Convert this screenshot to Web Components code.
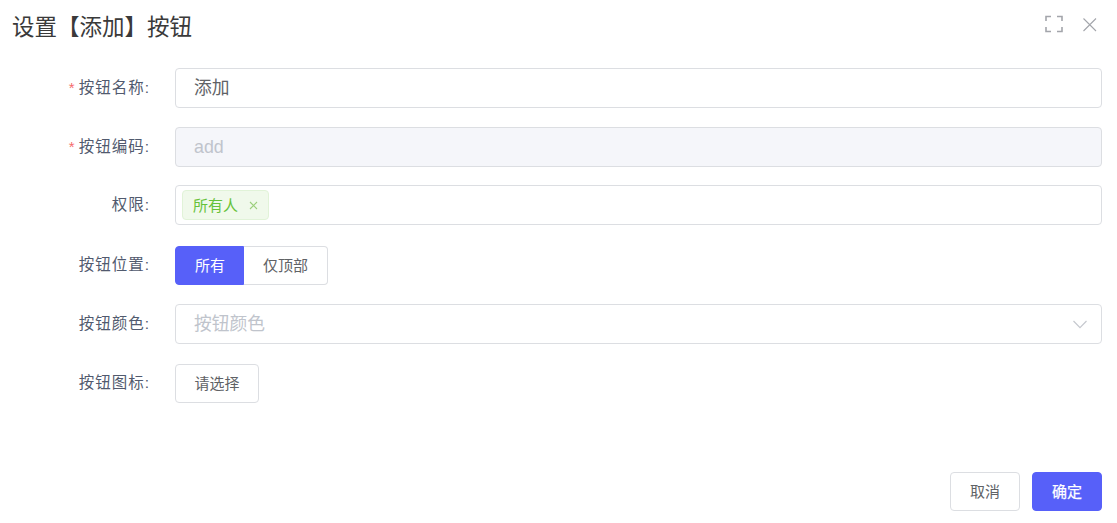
<!DOCTYPE html>
<html lang="zh">
<head>
<meta charset="utf-8">
<title>设置按钮</title>
<style>
  html, body { margin: 0; padding: 0; background: #fff; }
  body { font-family: "Liberation Sans", "Noto Sans CJK SC", sans-serif; }
</style>
</head>
<body>
<btn-dialog>
  <span slot="title">设置【添加】按钮</span>

  <form-row label="按钮名称" required gap="19">
    <text-box value="添加"></text-box>
  </form-row>
  <form-row label="按钮编码" required gap="18">
    <text-box value="add" disabled></text-box>
  </form-row>
  <form-row label="权限" gap="21">
    <text-box><green-tag>所有人</green-tag></text-box>
  </form-row>
  <form-row label="按钮位置" gap="19" h="39">
    <radio-group>
      <radio-btn checked>所有</radio-btn>
      <radio-btn>仅顶部</radio-btn>
    </radio-group>
  </form-row>
  <form-row label="按钮颜色" gap="20">
    <text-box placeholder="按钮颜色" arrow></text-box>
  </form-row>
  <form-row label="按钮图标" gap="0" h="39">
    <plain-btn w="84">请选择</plain-btn>
  </form-row>

  <plain-btn slot="footer" w="70">取消</plain-btn>
  <plain-btn slot="footer" w="70" primary>确定</plain-btn>
</btn-dialog>

<script>
class BtnDialog extends HTMLElement {
  constructor () {
    super();
    this.attachShadow({mode: 'open'}).innerHTML = `
      <style>
      :host { display: flex; flex-direction: column; height: 523px; box-sizing: border-box; padding: 0 15px 12px 12px; }
      header { display: flex; justify-content: space-between; height: 68px; flex: none; }
      .title { font-size: 22.5px; line-height: 30px; margin-top: 13px; color: #3a3a3a; }
      .tools { display: flex; gap: 19px; padding: 15px 5px 0 0; height: 20px; }
      .tools svg { display: block; stroke: #a3a5ab; fill: none; }
      main { flex: 1; }
      footer { display: flex; justify-content: flex-end; gap: 12px; }
      </style>
      <header>
        <div class="title"><slot name="title"></slot></div>
        <div class="tools">
          <svg width="18" height="18" viewBox="0 0 18 18" stroke-width="1.6">
            <path d="M1 6V1.5H6M12 1.5H17V6M17 12V16.5H12M6 16.5H1V12"/>
          </svg>
          <svg width="15" height="18" viewBox="0 0 15 18" stroke-width="1.1">
            <path d="M1.5 3.5L14 16M14 3.5L1.5 16"/>
          </svg>
        </div>
      </header>
      <main><slot></slot></main>
      <footer><slot name="footer"></slot></footer>`;
  }
}

class FormRow extends HTMLElement {
  constructor () {
    super();
    this.attachShadow({mode: 'open'}).innerHTML = `
      <style>
      :host { display: flex; align-items: center; }
      label { width: 138px; flex: none; padding: 0 25px 0 0; text-align: right; font-size: 15.5px; line-height: 20px; color: #515a6e; letter-spacing: 1px; white-space: nowrap; }
      :host([h]) label { padding-bottom: 2px; }
      .req { color: #f56c6c; font-size: 15px; margin-right: 4px; letter-spacing: 0; }
      .body { flex: 1; min-width: 0; }
      </style>
      <label></label>
      <div class="body"><slot></slot></div>`;
  }
  connectedCallback () {
    const label = this.shadowRoot.querySelector('label');
    const req = this.hasAttribute('required') ? '<span class="req">*</span>' : '';
    label.innerHTML = req + this.getAttribute('label') + ':';
    this.style.marginBottom = (this.getAttribute('gap') || 0) + 'px';
    this.style.height = (this.getAttribute('h') || 40) + 'px';
  }
}

class TextBox extends HTMLElement {
  constructor () {
    super();
    this.attachShadow({mode: 'open'}).innerHTML = `
      <style>
      :host { display: flex; align-items: center; position: relative; box-sizing: border-box; height: 40px; padding: 0 18px; border: 1px solid #dcdee2; border-radius: 4px; background: #fff; font-size: 17.8px; color: #606266; }
      :host([disabled]) { background: #f5f6fa; color: #c0c4cc; }
      :host([placeholder]) { color: #c0c4cc; }
      .val { position: relative; top: -2px; }
      :host([disabled]) .val { top: 0; }
      ::slotted(green-tag) { margin-left: -12px; }
      svg { position: absolute; right: 14px; top: 15px; stroke: #c5c8ce; fill: none; }
      </style>
      <span class="val"></span><slot></slot>`;
  }
  connectedCallback () {
    const val = this.getAttribute('value') || this.getAttribute('placeholder') || '';
    this.shadowRoot.querySelector('.val').textContent = val;
    if (this.hasAttribute('arrow')) {
      this.shadowRoot.innerHTML += `<svg width="14" height="9" viewBox="0 0 14 9" stroke-width="1.2"><path d="M.5 1L7 7.6 13.5 1"/></svg>`;
    }
  }
}

class GreenTag extends HTMLElement {
  constructor () {
    super();
    this.attachShadow({mode: 'open'}).innerHTML = `
      <style>
      :host { display: inline-flex; align-items: center; box-sizing: border-box; height: 30px; padding: 0 10px 2px; background: #f0f9eb; border: 1px solid #e1f3d8; border-radius: 4px; color: #67c23a; font-size: 15px; }
      svg { margin: 2px 0 0 11px; stroke: #9ccf7c; fill: none; }
      </style>
      <slot></slot>
      <svg width="9" height="9" viewBox="0 0 9 9" stroke-width="1.1"><path d="M1 1L8 8M8 1L1 8"/></svg>`;
  }
}

class RadioGroup extends HTMLElement {
  constructor () {
    super();
    this.attachShadow({mode: 'open'}).innerHTML = `
      <style>
      :host { display: flex; }
      </style>
      <slot></slot>`;
  }
}

class RadioBtn extends HTMLElement {
  constructor () {
    super();
    this.attachShadow({mode: 'open'}).innerHTML = `
      <style>
      :host { display: flex; align-items: center; justify-content: center; box-sizing: border-box; height: 39px; padding: 0 19px 2px; font-size: 15px; color: #606266; background: #fff; border: 1px solid #dcdee2; border-left: 0; border-radius: 0 4px 4px 0; }
      :host([checked]) { background: #5760f9; color: #fff; border: 1px solid #5760f9; border-radius: 4px 0 0 4px; padding: 0 18px 2px 19px; }
      </style>
      <slot></slot>`;
  }
}

class PlainBtn extends HTMLElement {
  constructor () {
    super();
    this.attachShadow({mode: 'open'}).innerHTML = `
      <style>
      :host { display: flex; align-items: center; justify-content: center; box-sizing: border-box; height: 39px; padding-bottom: 2px; font-size: 15px; color: #606266; background: #fff; border: 1px solid #dcdee2; border-radius: 4px; }
      :host([primary]) { background: #5760f9; border-color: #5760f9; color: #fff; -webkit-text-stroke: .25px #fff; }
      </style>
      <slot></slot>`;
  }
  connectedCallback () {
    this.style.width = this.getAttribute('w') + 'px';
  }
}

customElements.define('btn-dialog', BtnDialog);
customElements.define('form-row', FormRow);
customElements.define('text-box', TextBox);
customElements.define('green-tag', GreenTag);
customElements.define('radio-group', RadioGroup);
customElements.define('radio-btn', RadioBtn);
customElements.define('plain-btn', PlainBtn);
</script>
</body>
</html>
